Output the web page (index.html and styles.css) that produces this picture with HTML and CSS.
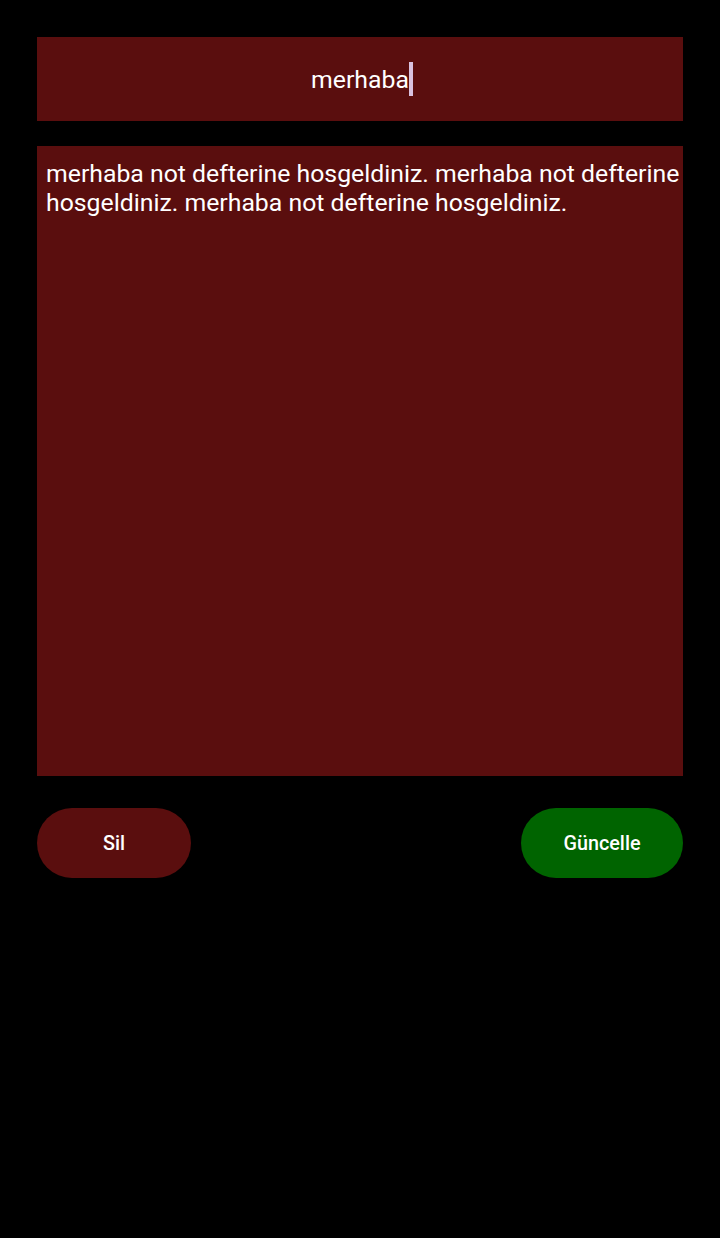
FILE: index.html
```html
<!DOCTYPE html>
<html lang="tr">
<head>
<meta charset="utf-8">
<link rel="stylesheet" href="styles.css">
</head>
<body>
<div class="screen">
  <div class="title-box"><span class="title">merhaba</span><span class="caret"></span></div>
  <div class="content-box">merhaba not defterine hosgeldiniz. merhaba not defterine hosgeldiniz. merhaba not defterine hosgeldiniz.</div>
  <div class="actions">
    <button class="btn btn-delete">Sil</button>
    <button class="btn btn-update">Güncelle</button>
  </div>
</div>
</body>
</html>
```
FILE: styles.css
```css
html, body {
  margin: 0;
  padding: 0;
  background: #000;
  width: 720px;
  height: 1238px;
  overflow: hidden;
}
.screen {
  padding: 37px 37px 0 37px;
  display: flex;
  flex-direction: column;
  font-family: Roboto, "Liberation Sans", sans-serif;
  color: #fff;
}
.title-box {
  height: 84px;
  background: #5a0e0e;
  display: flex;
  align-items: center;
  justify-content: center;
  padding-left: 4px;
}
.title {
  font-size: 24.8px;
  line-height: 30px;
  padding-top: 2px;
}
.caret {
  display: inline-block;
  width: 4px;
  height: 34px;
  background: #d9c2df;
}
.content-box {
  margin-top: 25px;
  height: 630px;
  box-sizing: border-box;
  background: #5a0e0e;
  padding: 13px 0 0 9px;
  font-size: 24.8px;
  line-height: 29px;
}
.actions {
  margin-top: 32px;
  display: flex;
  justify-content: space-between;
}
.btn {
  border: none;
  height: 70px;
  border-radius: 35px;
  color: #fff;
  font-family: Roboto, "Liberation Sans", sans-serif;
  font-weight: 500;
  font-size: 19.8px;
  padding: 1px 0 0 0;
}
.btn-delete {
  width: 154px;
  background: #5a0e0e;
}
.btn-update {
  width: 162px;
  background: #006400;
}
```
